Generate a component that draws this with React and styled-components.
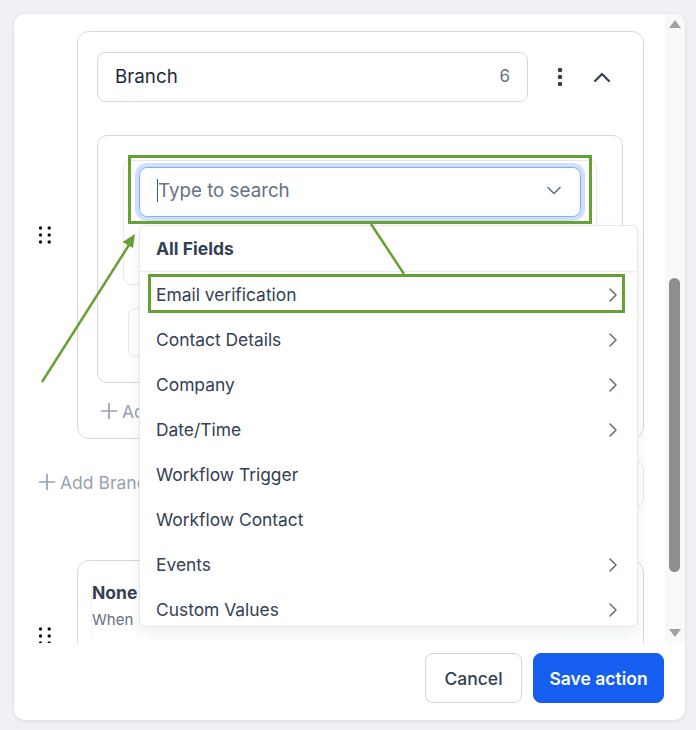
import React from "react";
import styled, { createGlobalStyle, css } from "styled-components";

const GlobalStyle = createGlobalStyle`
  *, *::before, *::after { box-sizing: border-box; }
  html, body { margin: 0; padding: 0; }
  body {
    background: #f0f1f4;
    font-family: Inter, "Noto Sans", Arial, sans-serif;
    color: #344054;
    -webkit-font-smoothing: antialiased;
  }
`;

const Page = styled.div`
  position: relative;
  width: 696px;
  height: 730px;
  padding: 14px;
`;

const Modal = styled.div`
  width: 671px;
  height: 706px;
  background: #ffffff;
  border-radius: 10px;
  box-shadow: 0 1px 4px rgba(16, 24, 40, 0.08), 0 0 1px rgba(16, 24, 40, 0.12);
  display: flex;
  flex-direction: column;
  overflow: hidden;
`;

const Body = styled.div`
  height: 629px;
  display: flex;
  flex-shrink: 0;
`;

const Scroller = styled.div`
  flex: 1;
  overflow: hidden;
  padding: 17px 21px 0 24px;
  display: flex;
  flex-direction: column;
`;

/* classic scrollbar with arrow buttons */
const Track = styled.div`
  width: 20px;
  background: #f9f9f9;
  display: flex;
  flex-direction: column;
  align-items: center;
  padding: 0 1px 0 0;
`;

const Arrow = styled.div`
  width: 0;
  height: 0;
  border-left: 6.5px solid transparent;
  border-right: 6.5px solid transparent;
  ${({ $down }) =>
    $down
      ? css`
          border-top: 8px solid #a3a3a3;
          margin-top: auto;
          margin-bottom: 6px;
        `
      : css`
          border-bottom: 8px solid #a3a3a3;
          margin-top: 6px;
        `}
`;

const Thumb = styled.div`
  width: 11px;
  height: 294px;
  margin-top: 250px;
  border-radius: 6px;
  background: #8e8e8e;
`;

const Row = styled.div`
  display: flex;
  align-items: center;
  flex-shrink: 0;
  margin-top: ${({ $gap }) => $gap || 0}px;
`;

const HandleCell = styled.div`
  width: 39px;
  flex-shrink: 0;
  display: flex;
  align-items: center;
`;

const BranchCard = styled.div`
  position: relative;
  width: 567px;
  border: 1px solid #d5d8de;
  border-radius: 12px;
  padding: 20px 20px 13px 19px;
  background: #fff;
`;

const Header = styled.div`
  display: flex;
  align-items: center;
  height: 50px;
`;

const NameField = styled.div`
  width: 431px;
  height: 50px;
  border: 1px solid #d5d8de;
  border-radius: 8px;
  padding: 0 17px 2px;
  display: flex;
  align-items: center;
  justify-content: space-between;
  font-size: 18.75px;
  color: #1d2939;
`;

const Count = styled.span`
  color: #667085;
  font-size: 17px;
`;

const IconButton = styled.div`
  width: 40px;
  height: 40px;
  display: flex;
  align-items: center;
  justify-content: center;
  margin-left: ${({ $ml }) => $ml || 0}px;
  color: #344054;
`;

const ConditionCard = styled.div`
  margin-top: 33px;
  border: 1px solid #d5d8de;
  border-radius: 10px;
  padding: 24px 25px 25px;
`;

const ConditionBox = styled.div`
  height: 125px;
  border: 1px solid #e4e7ec;
  border-radius: 8px;
  padding: 6px 15px;
`;

const SelectWrap = styled.div`
  position: relative;
`;

const SearchSelect = styled.div`
  height: 50px;
  border: 1px solid #84adff;
  border-radius: 8px;
  box-shadow: 0 0 0 4px #d1e0ff;
  display: flex;
  align-items: center;
  padding: 0 19px 3px 17px;
  background: #fff;
`;

const Placeholder = styled.span`
  flex: 1;
  font-size: 18.75px;
  color: #667085;
  display: flex;
  align-items: center;

  &::before {
    content: "";
    width: 1px;
    height: 23px;
    background: #155eef;
  }
`;

const Menu = styled.div`
  position: absolute;
  z-index: 20;
  top: calc(100% + 8px);
  left: 0;
  width: 499px;
  height: 402px;
  overflow: hidden;
  background: #fff;
  border: 1px solid #e4e7ec;
  border-radius: 6px;
  box-shadow: 0 6px 14px rgba(16, 24, 40, 0.07);
`;

const MenuTitle = styled.div`
  height: 46px;
  padding: 0 16px;
  display: flex;
  align-items: center;
  font-size: 17.5px;
  font-weight: 700;
  color: #344054;
  border-bottom: 1px solid #eaecf0;
`;

const MenuItem = styled.div`
  height: 45px;
  flex-shrink: 0;
  padding: 0 12px 0 16px;
  display: flex;
  align-items: center;
  justify-content: space-between;
  font-size: 17.4px;
  color: #344054;
`;

const GhostButton = styled.div`
  margin: 23px 0 0 5px;
  width: 180px;
  height: 49px;
  border: 1px solid #e4e7ec;
  border-radius: 8px;
`;

const AddLink = styled.div`
  display: flex;
  align-items: center;
  gap: 4px;
  height: 28px;
  font-size: 17.5px;
  color: #98a2b3;
  margin-top: ${({ $mt }) => $mt || 0}px;
  padding-left: ${({ $pl }) => $pl || 0}px;
`;

const AddBranchRow = styled.div`
  margin-top: 21px;
  height: 48px;
  flex-shrink: 0;
  display: flex;
  align-items: center;
  justify-content: space-between;
`;

const SideBox = styled.div`
  width: 140px;
  height: 48px;
  border: 1px solid #e4e7ec;
  border-radius: 10px;
`;

const NoneCard = styled.div`
  width: 567px;
  height: 152px;
  border: 1px solid #d5d8de;
  border-radius: 12px;
  padding: 21px 13px;
`;

const NoneBody = styled.div`
  border-left: 1px solid #f2f4f7;
  height: 100%;
`;

const NoneTitle = styled.div`
  font-size: 17.5px;
  font-weight: 700;
  line-height: 22px;
  color: #344054;
`;

const NoneText = styled.div`
  margin-top: 6px;
  font-size: 15px;
  line-height: 20px;
  color: #667085;
`;

const Footer = styled.div`
  flex: 1;
  display: flex;
  justify-content: flex-end;
  align-items: flex-start;
  gap: 11px;
  padding: 10px 21px 0 0;
`;

const Button = styled.button`
  height: 50px;
  border-radius: 8px;
  font-family: inherit;
  font-size: 17.5px;
  padding: 0;
  cursor: pointer;
  ${({ $primary }) =>
    $primary
      ? css`
          width: 131px;
          background: #155eef;
          border: 1px solid #155eef;
          color: #fff;
          font-weight: 600;
        `
      : css`
          width: 97px;
          background: #fff;
          border: 1px solid #d0d5dd;
          color: #344054;
          font-weight: 500;
        `}
`;

const Annotations = styled.svg`
  position: absolute;
  top: 0;
  left: 0;
  width: 696px;
  height: 730px;
  pointer-events: none;
  z-index: 100;
`;

const Grip = () => (
  <svg width="14" height="18" viewBox="0 0 14 18">
    {[2, 9, 16].map((y) =>
      [2.5, 11.2].map((x) => <circle key={`${x}-${y}`} cx={x} cy={y} r="1.7" fill="#111" />)
    )}
  </svg>
);

const Kebab = () => (
  <svg width="6" height="22" viewBox="0 0 6 22">
    <circle cx="3" cy="4" r="2.3" fill="#344054" />
    <circle cx="3" cy="11" r="2.3" fill="#344054" />
    <circle cx="3" cy="18" r="2.3" fill="#344054" />
  </svg>
);

const ChevronUp = () => (
  <svg width="18" height="11" viewBox="0 0 18 11">
    <polyline points="2,9 9,2 16,9" fill="none" stroke="#344054" strokeWidth="2.2" strokeLinecap="round" strokeLinejoin="round" />
  </svg>
);

const ChevronDown = () => (
  <svg width="14" height="9" viewBox="0 0 14 9">
    <polyline points="1,1.5 7,7.5 13,1.5" fill="none" stroke="#667085" strokeWidth="1.6" strokeLinecap="round" strokeLinejoin="round" />
  </svg>
);

const ChevronRight = () => (
  <svg width="24" height="24" viewBox="0 0 24 24">
    <polyline points="9,6 15,12 9,18" fill="none" stroke="#667085" strokeWidth="1.6" strokeLinecap="round" strokeLinejoin="round" />
  </svg>
);

const PlusIcon = () => (
  <svg width="18" height="18" viewBox="0 0 18 18">
    <path d="M9 1.5v15M1.5 9h15" stroke="#98a2b3" strokeWidth="1.7" strokeLinecap="round" />
  </svg>
);

const fields = [
  { label: "Email verification", sub: true },
  { label: "Contact Details", sub: true },
  { label: "Company", sub: true },
  { label: "Date/Time", sub: true },
  { label: "Workflow Trigger", sub: false },
  { label: "Workflow Contact", sub: false },
  { label: "Events", sub: true },
  { label: "Custom Values", sub: true },
];

const green = "#67a034";

export default function App() {
  return (
    <>
      <GlobalStyle />
      <Page>
        <Modal>
          <Body>
            <Scroller>
              <Row>
                <HandleCell>
                  <Grip />
                </HandleCell>
                <BranchCard>
                  <Header>
                    <NameField>
                      <span>Branch</span>
                      <Count>6</Count>
                    </NameField>
                    <IconButton $ml={12}>
                      <Kebab />
                    </IconButton>
                    <IconButton $ml={2}>
                      <ChevronUp />
                    </IconButton>
                  </Header>
                  <ConditionCard>
                    <ConditionBox>
                      <SelectWrap>
                        <SearchSelect>
                          <Placeholder>Type to search</Placeholder>
                          <ChevronDown />
                        </SearchSelect>
                        <Menu>
                          <MenuTitle>All Fields</MenuTitle>
                          {fields.map((f) => (
                            <MenuItem key={f.label}>
                              <span>{f.label}</span>
                              {f.sub && <ChevronRight />}
                            </MenuItem>
                          ))}
                        </Menu>
                      </SelectWrap>
                    </ConditionBox>
                    <GhostButton />
                  </ConditionCard>
                  <AddLink $mt={14} $pl={3}>
                    <PlusIcon />
                    Add
                  </AddLink>
                </BranchCard>
              </Row>
              <AddBranchRow>
                <AddLink $mt={-4}>
                  <PlusIcon />
                  Add Branch
                </AddLink>
                <SideBox />
              </AddBranchRow>
              <Row $gap={52}>
                <HandleCell>
                  <Grip />
                </HandleCell>
                <NoneCard>
                  <NoneBody>
                    <NoneTitle>None</NoneTitle>
                    <NoneText>When</NoneText>
                  </NoneBody>
                </NoneCard>
              </Row>
            </Scroller>
            <Track>
              <Arrow />
              <Thumb />
              <Arrow $down />
            </Track>
          </Body>
          <Footer>
            <Button>Cancel</Button>
            <Button $primary>Save action</Button>
          </Footer>
        </Modal>
        <Annotations viewBox="0 0 696 730">
          <rect x="129.5" y="156.5" width="461" height="66" fill="none" stroke={green} strokeWidth="3" />
          <rect x="149.5" y="275.5" width="474" height="36" fill="none" stroke={green} strokeWidth="3" />
          <line x1="371" y1="224" x2="404" y2="274" stroke={green} strokeWidth="2.5" />
          <line x1="42" y1="382" x2="129" y2="245" stroke={green} strokeWidth="2.5" />
          <polygon points="135,234 122.5,242 133,248" fill={green} />
        </Annotations>
      </Page>
    </>
  );
}
